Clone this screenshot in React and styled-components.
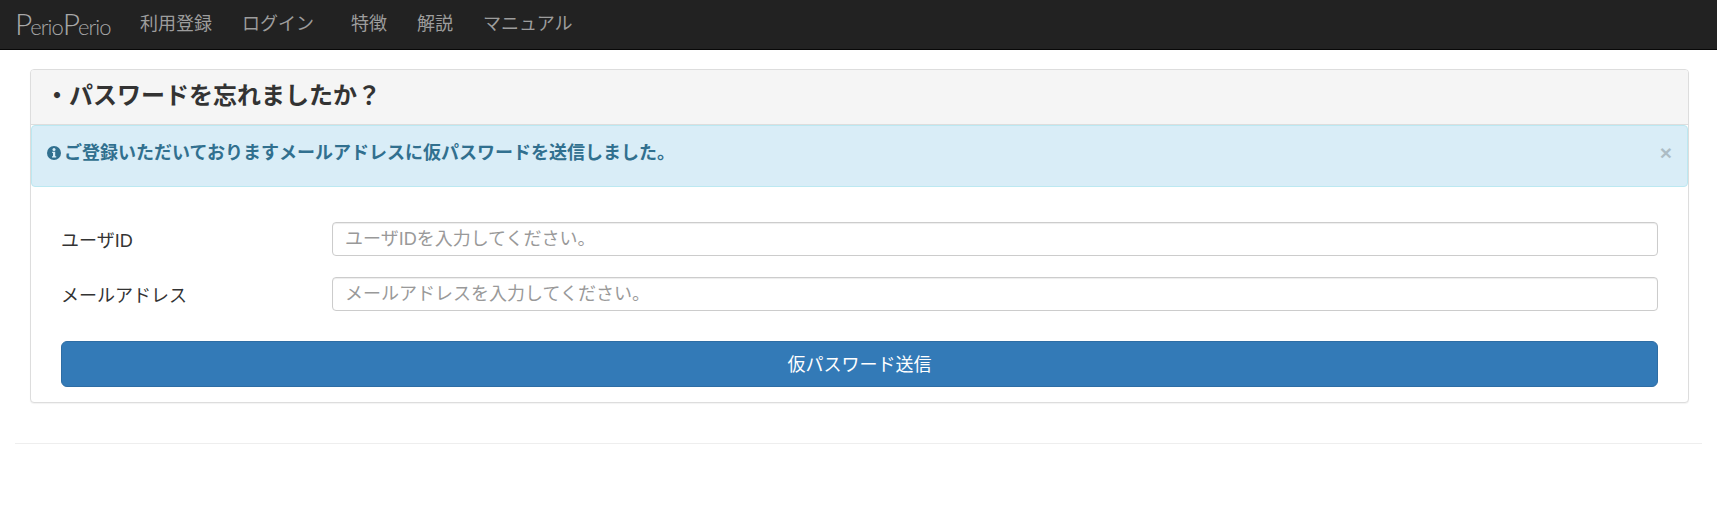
import React from "react";
import styled, { createGlobalStyle } from "styled-components";

const GlobalStyle = createGlobalStyle`
  * {
    box-sizing: border-box;
  }

  body {
    margin: 0;
    background-color: #fff;
    color: #333;
    font-family: "Liberation Sans", "Noto Sans CJK JP", sans-serif;
    font-size: 18px;
  }
`;

const App = () => {
  return (
    <>
      <GlobalStyle />
      <Navbar>
        <Logo>
          <LogoCap>P</LogoCap>erio<LogoCap>P</LogoCap>erio
        </Logo>
        <NavList>
          <NavLink>利用登録</NavLink>
          <NavLink $wide>ログイン</NavLink>
          <NavLink>特徴</NavLink>
          <NavLink>解説</NavLink>
          <NavLink>マニュアル</NavLink>
        </NavList>
      </Navbar>
      <Container>
        <Panel>
          <PanelHeading>・パスワードを忘れましたか？</PanelHeading>
          <Alert>
            <InfoIcon />
            <AlertText>
              ご登録いただいておりますメールアドレスに仮パスワードを送信しました。
            </AlertText>
            <CloseButton>×</CloseButton>
          </Alert>
          <Form>
            <FormRow label="ユーザID" placeholder="ユーザIDを入力してください。" />
            <FormRow
              label="メールアドレス"
              placeholder="メールアドレスを入力してください。"
            />
            <SubmitButton type="button">仮パスワード送信</SubmitButton>
          </Form>
        </Panel>
        <Divider />
      </Container>
    </>
  );
};

export default App;

const FormRow = ({ label, placeholder }) => {
  return (
    <Row>
      <Label>{label}</Label>
      <Input type="text" placeholder={placeholder} />
    </Row>
  );
};

const InfoIcon = () => {
  return (
    <IconSvg viewBox="0 0 14 14" aria-hidden="true">
      <circle cx="7" cy="7" r="7" fill="#31708f" />
      <circle cx="7" cy="3.4" r="1.5" fill="#d9edf7" />
      <path d="M5.2 5.8h3v4.4h1v1.3H5v-1.3h1V7.1h-.8z" fill="#d9edf7" />
    </IconSvg>
  );
};

const Navbar = styled.nav`
  display: flex;
  align-items: center;
  height: 50px;
  padding-left: 15px;
  background-color: #222;
  border-bottom: 1px solid #080808;
`;

const Logo = styled.span`
  width: 125px;
  color: #a8a8a8;
  font-family: "Lato", sans-serif;
  font-size: 22px;
  font-weight: 300;
  letter-spacing: -1px;
  line-height: 30px;
  white-space: nowrap;
`;

const LogoCap = styled.span`
  font-size: 30px;
  font-weight: 300;
  letter-spacing: -2px;
`;

const NavList = styled.div`
  display: flex;
  align-items: center;
  gap: 30px;
  margin-bottom: 2px;
`;

const NavLink = styled.a`
  color: #9d9d9d;
  font-size: 18px;
  line-height: 24px;
  margin-right: ${(props) => (props.$wide ? "7px" : "0")};
`;

const Container = styled.main`
  padding: 19px 15px 0;
`;

const Panel = styled.section`
  margin: 0 13px 0 15px;
  background-color: #fff;
  border: 1px solid #ddd;
  border-radius: 4px;
  box-shadow: 0 1px 1px rgba(0, 0, 0, 0.05);
`;

const PanelHeading = styled.h3`
  height: 55px;
  margin: 0;
  padding: 0 0 0 14px;
  background-color: #f5f5f5;
  border-bottom: 1px solid #ddd;
  border-radius: 3px 3px 0 0;
  color: #333;
  font-size: 24px;
  font-weight: 700;
  line-height: 51px;
`;

const Alert = styled.div`
  display: flex;
  align-items: center;
  height: 62px;
  padding: 0 15px 0 15px;
  background-color: #d9edf7;
  border: 1px solid #bce8f1;
  border-radius: 4px;
  color: #31708f;
`;

const IconSvg = styled.svg`
  flex: none;
  width: 14px;
  height: 14px;
  margin: -7px 3px 0 0;
`;

const AlertText = styled.span`
  flex: 1;
  margin-top: -10px;
  font-size: 18px;
  font-weight: 700;
`;

const CloseButton = styled.span`
  margin-top: -7px;
  color: #000;
  font-size: 21px;
  font-weight: 700;
  line-height: 1;
  opacity: 0.2;
`;

const Form = styled.form`
  display: flex;
  flex-direction: column;
  padding: 35px 30px 15px;
`;

const Row = styled.div`
  display: flex;
  align-items: center;
  height: 34px;
  margin-bottom: 21px;
`;

const Label = styled.label`
  width: 271px;
  color: #333;
  font-size: 18px;
`;

const Input = styled.input`
  flex: 1;
  height: 34px;
  padding: 6px 12px;
  background-color: #fff;
  border: 1px solid #ccc;
  border-radius: 4px;
  box-shadow: inset 0 1px 1px rgba(0, 0, 0, 0.075);
  color: #555;
  font-family: inherit;
  font-size: 18px;
  outline: none;

  &::placeholder {
    color: #999;
    opacity: 1;
  }
`;

const SubmitButton = styled.button`
  height: 46px;
  margin-top: 9px;
  padding-bottom: 4px;
  background-color: #337ab7;
  border: 1px solid #2e6da4;
  border-radius: 6px;
  color: #fff;
  font-family: inherit;
  font-size: 18px;
  cursor: pointer;
`;

const Divider = styled.hr`
  margin: 40px 0 0;
  border: 0;
  border-top: 1px solid #eee;
`;
